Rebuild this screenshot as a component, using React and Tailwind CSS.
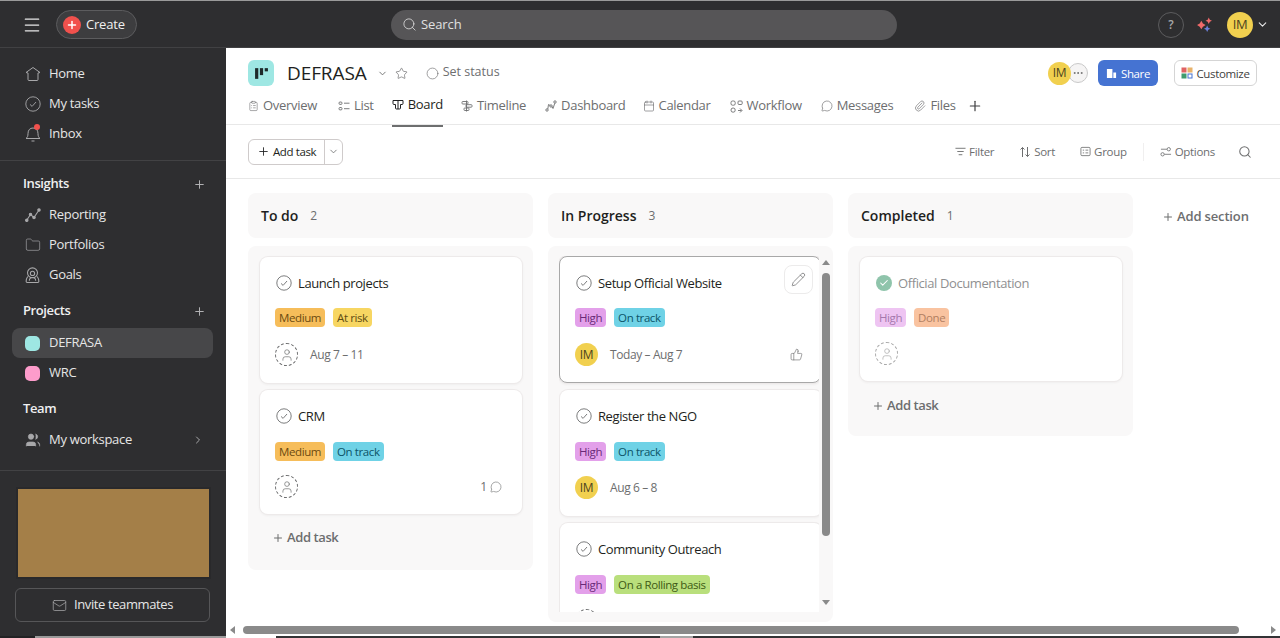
import React from 'react';
import { Plus, Search, ChevronDown, ChevronRight, Star, Circle, Pencil, ThumbsUp, Mail, Menu, Folder, Paperclip, Calendar, MessageCircle, Ellipsis, User, Users, Check, ClipboardList } from 'lucide-react';

const HomeIcon = (p) => (
  <svg viewBox="0 0 16 16" fill="none" stroke="currentColor" strokeWidth="1" {...p}>
    <path d="M8 1.500 15 6.500 13 7V13.500a1 1 0 0 1-1 1H4a1 1 0 0 1-1-1V7L1 6.500Z" strokeLinejoin="round" />
  </svg>
);
const TaskCheck = ({ className }) => (
  <svg viewBox="0 0 16 16" fill="none" stroke="currentColor" strokeWidth="0.9" className={className}>
    <circle cx="8" cy="8" r="7.200" />
    <path d="M5 8.400 7.100 10.400 11 6" />
  </svg>
);
const BellIcon = (p) => (
  <svg viewBox="0 0 16 16" fill="none" stroke="currentColor" strokeWidth="1" {...p}>
    <path d="M1 12.500c1.500-1 2-2.500 2-5C3 4 5 2 8 2s5 2 5 5.500c0 2.500.5 4 2 5Z" strokeLinejoin="round" />
    <path d="M6.500 15h3" />
  </svg>
);
const ReportIcon = (p) => (
  <svg viewBox="0 0 16 16" fill="none" stroke="currentColor" strokeWidth="1.100" {...p}>
    <path d="M1.500 13.500 5.500 7.500 9 10.500 14 3" />
    <circle cx="1.800" cy="13.200" r="1.200" fill="currentColor" />
    <circle cx="5.500" cy="7.500" r="1.200" fill="currentColor" />
    <circle cx="9" cy="10.500" r="1.200" fill="currentColor" />
    <circle cx="14" cy="3" r="1.200" fill="currentColor" />
  </svg>
);
const GoalIcon = (p) => (
  <svg viewBox="0 0 16 16" fill="none" stroke="currentColor" strokeWidth="1" {...p}>
    <circle cx="8" cy="5.500" r="4.700" />
    <circle cx="8" cy="6" r="2" />
    <path d="M3.500 9C2.500 10.500 2 12 2 13.500a1 1 0 0 0 1 1h10a1 1 0 0 0 1-1c0-1.500-.5-3-1.500-4.500" />
    <path d="M5 13c0-2 1.300-3.200 3-3.200s3 1.200 3 3.200" />
  </svg>
);
const BoardIcon = (p) => (
  <svg viewBox="0 0 12 12" fill="none" stroke="currentColor" strokeWidth="1" {...p}>
    <path d="M1 1.500h10v3a1 1 0 0 1-1 1H8.500V9a1 1 0 0 1-1 1h-3a1 1 0 0 1-1-1V5.500H2a1 1 0 0 1-1-1ZM6 2v8" />
  </svg>
);
const ListIcon = (p) => (
  <svg viewBox="0 0 12 12" fill="none" stroke="currentColor" strokeWidth="0.9" {...p}>
    <rect x="1" y="2" width="3" height="2.400" rx="1" />
    <rect x="1" y="7.500" width="3" height="2.400" rx="1" />
    <path d="M6 3.200h5.500M6 8.700h5.500" />
  </svg>
);
const TimelineIcon = (p) => (
  <svg viewBox="0 0 12 12" fill="none" stroke="currentColor" strokeWidth="0.9" {...p}>
    <rect x="1" y="1.500" width="6" height="2.500" rx="0.800" />
    <rect x="5" y="4.700" width="6" height="2.500" rx="0.800" />
    <rect x="3" y="8" width="5" height="2.500" rx="0.800" />
    <path d="M5.500 0.500v11" />
  </svg>
);
const DashIcon = (p) => (
  <svg viewBox="0 0 12 12" fill="none" stroke="currentColor" strokeWidth="0.9" {...p}>
    <circle cx="2" cy="10" r="1.200" />
    <circle cx="6" cy="6" r="1.200" />
    <circle cx="10" cy="2" r="1.200" />
    <path d="M2.800 9 3.500 4.500 5.200 5.500M7 6.500 8 8.500 9.800 3.200" />
  </svg>
);
const WorkflowIcon = (p) => (
  <svg viewBox="0 0 13 13" fill="none" stroke="currentColor" strokeWidth="0.9" {...p}>
    <rect x="1" y="1" width="4.200" height="4.200" rx="1.500" />
    <rect x="8" y="1" width="4.200" height="3.500" rx="1" />
    <rect x="1" y="8" width="4.200" height="4.200" rx="2" />
    <path d="M8 10.500h3.500M10 8.500l2 2-2 2" />
  </svg>
);
const FilterIcon = (p) => (
  <svg viewBox="0 0 12 12" fill="none" stroke="currentColor" strokeWidth="1" {...p}>
    <path d="M0.500 2.500h11M2.500 6h7M4 9.500h4" />
  </svg>
);
const SortIcon = (p) => (
  <svg viewBox="0 0 12 12" fill="none" stroke="currentColor" strokeWidth="1" {...p}>
    <path d="M3.500 11V1.500M1.500 3.500l2-2 2 2M8.500 1v9.500M6.500 8.500l2 2 2-2" />
  </svg>
);
const GroupIcon = (p) => (
  <svg viewBox="0 0 12 12" fill="none" stroke="currentColor" strokeWidth="0.9" {...p}>
    <rect x="1" y="1.500" width="10" height="9" rx="1.200" />
    <path d="M3 4.500h1.500M6 4.500h3M3 7.500h1.500M6 7.500h3" />
  </svg>
);
const OptionsIcon = (p) => (
  <svg viewBox="0 0 13 12" fill="none" stroke="currentColor" strokeWidth="0.9" {...p}>
    <circle cx="9.500" cy="3" r="1.800" />
    <circle cx="2.800" cy="8.500" r="1.800" />
    <path d="M1 3h6.500M4.800 8.500H12" />
  </svg>
);

// dashed circle with a person inside, used for unassigned tasks
const Unassigned = ({ faded }) => (
  <div className={`flex h-[23px] w-[23px] shrink-0 items-center justify-center rounded-full border border-dashed ${faded ? 'border-[#a9a9a9] text-[#a9a9a9]' : 'border-[#6d6e6f] text-[#6d6e6f]'}`}>
    <User className="h-[14px] w-[14px]" strokeWidth={1.200} />
  </div>
);

const Avatar = ({ className = 'h-[23px] w-[23px] text-[12px]' }) => (
  <div className={`flex shrink-0 items-center justify-center rounded-full bg-[#f1d04f] tracking-[-0.3px] text-[#4b4320] ${className}`}>IM</div>
);

const medium = 'bg-[#f6bd5a] text-[#6b4a10]';
const atRisk = 'bg-[#f7d662] text-[#5e4d12]';
const high = 'bg-[#e3a0ea] text-[#6a2a78]';
const onTrack = 'bg-[#6fd2e6] text-[#0c5468]';
const rolling = 'bg-[#b9df7c] text-[#3e5a14]';
const highDone = 'bg-[#eec4f2] text-[#a578ad]';
const done = 'bg-[#f9c3a0] text-[#b07e60]';

const Tag = ({ color, children }) => (
  <span className={`flex h-[19px] items-center rounded-[4px] px-[4px] text-[11.5px] tracking-[-0.4px] ${color}`}>{children}</span>
);

// first = top card of a column, its rows sit a pixel higher in the picture
const rowGap = (first, tight) => {
  if (first) return tight ? 'mt-[15px]' : 'mt-[16px]';
  return tight ? 'mt-[14px]' : 'mt-[15px]';
};

const Card = ({ title, tags, date, who, right, hovered, isDone, h, tight, nudge, first }) => (
  <div className={`w-[262px] shrink-0 rounded-[8px] bg-white pl-[16px] pt-[17px] shadow-[0_0_0_1px_#edeaea,0_1px_3px_#e6e4e4] ${h} ${hovered ? 'relative -mt-[1px] border border-[#a8a8a8]' : ''} ${nudge ? 'ml-[1px]' : ''}`}>
    <div className="flex items-center gap-[6px]">
      {isDone ? (
        <div className="flex h-[16px] w-[16px] items-center justify-center rounded-full bg-[#8fc4ab]">
          <Check className="h-[10px] w-[10px] text-white" strokeWidth={2.500} />
        </div>
      ) : (
        <TaskCheck className="h-[16px] w-[16px] text-[#6d6e6f]" />
      )}
      <span className={`text-[13px] leading-[18px] tracking-[-0.4px] ${isDone ? 'text-[#8f9091]' : 'text-[#1e1f21]'}`}>{title}</span>
    </div>
    <div className={`-ml-[1px] flex gap-[8px] ${first ? 'mt-[16px]' : 'mt-[17px]'}`}>
      {tags.map((t) => (
        <Tag key={t[0]} color={t[1]}>{t[0]}</Tag>
      ))}
    </div>
    <div className={`-ml-[1px] flex h-[23px] items-center ${hovered ? 'pr-[17px]' : 'pr-[20px]'} ${rowGap(first, tight)}`}>
      {who === 'me' ? <Avatar /> : <Unassigned faded={isDone} />}
      {date && <span className="ml-[12px] text-[12px] tracking-[-0.4px] text-[#6d6e6f]">{date}</span>}
      {right && <div className="ml-auto flex items-center gap-[3px] text-[12px] text-[#6d6e6f]">{right}</div>}
    </div>
    {hovered && (
      <div className="absolute right-[7px] top-[8px] flex h-[29px] w-[29px] items-center justify-center rounded-[8px] border border-[#ecebeb] bg-white">
        <Pencil className="h-[15px] w-[15px] text-[#6d6e6f]" strokeWidth={1.200} />
      </div>
    )}
  </div>
);

const AddTask = ({ className }) => (
  <div className={`flex items-center gap-[3px] text-[13px] font-semibold tracking-[-0.4px] text-[#6d6e6f] ${className}`}>
    <Plus className="h-[12px] w-[12px]" strokeWidth={2} />
    Add task
  </div>
);

const SideItem = ({ icon, label, right, active }) => (
  <div className={`ml-[12px] mr-[13px] flex h-[30px] items-center gap-[8px] rounded-[8px] pl-[12px] pr-[9px] text-[13px] tracking-[-0.3px] text-[#e6e6e6] ${active ? 'bg-[#474749]' : ''}`}>
    <span className="flex w-[17px] justify-center text-[#a8a8aa]">{icon}</span>
    <span>{label}</span>
    {right && <span className="ml-auto text-[#a8a8aa]">{right}</span>}
  </div>
);

const SideHead = ({ label, plus, className }) => (
  <div className={`flex items-center justify-between pl-[23px] pr-[20px] text-[13px] font-semibold tracking-[-0.4px] text-[#f0f0f0] ${className}`}>
    <span>{label}</span>
    {plus && <Plus className="h-[13px] w-[13px] text-[#b5b5b7]" strokeWidth={1.800} />}
  </div>
);

const tabs = [
  [<ClipboardList key="i" className="h-[12px] w-[11px]" strokeWidth={1.300} />, 'Overview', 'mr-[21px]'],
  [<ListIcon key="i" className="h-[12px] w-[12px]" />, 'List', 'mr-[18px]'],
  [<BoardIcon key="i" className="h-[12px] w-[12px]" />, 'Board', 'mr-[18px]'],
  [<TimelineIcon key="i" className="h-[12px] w-[12px]" />, 'Timeline', 'mr-[19px]'],
  [<DashIcon key="i" className="h-[12px] w-[12px]" />, 'Dashboard', 'mr-[17px]'],
  [<Calendar key="i" className="h-[12px] w-[12px]" strokeWidth={1.300} />, 'Calendar', 'mr-[19px]'],
  [<WorkflowIcon key="i" className="h-[13px] w-[13px]" />, 'Workflow', 'mr-[19px]'],
  [<MessageCircle key="i" className="h-[12px] w-[12px]" strokeWidth={1.300} />, 'Messages', 'mr-[21px]'],
  [<Paperclip key="i" className="h-[12px] w-[12px]" strokeWidth={1.300} />, 'Files', 'mr-[11px]'],
];

const ToolBtn = ({ icon, label, className }) => (
  <div className={`flex items-center gap-[3px] text-[11.5px] font-medium tracking-[-0.3px] text-[#6d6e6f] ${className}`}>
    {icon}
    {label}
  </div>
);

const ColHead = ({ title, n }) => (
  <div className="flex h-[45px] w-[285px] items-center rounded-[8px] bg-[#f9f8f8] pl-[13px]">
    <span className="text-[14px] font-semibold text-[#1e1f21]">{title}</span>
    <span className="ml-[12px] text-[12px] text-[#6d6e6f]">{n}</span>
  </div>
);

export default function App() {
  return (
    <div className="relative flex h-[638px] w-[1280px] flex-col overflow-hidden bg-white font-['Open_Sans',sans-serif]">
      {/* top bar */}
      <header className="flex h-[48px] shrink-0 items-center border-t border-t-[#9a9a9a] border-b border-b-[#414143] bg-[#2e2e30] pt-[1px]">
        <Menu className="ml-[22px] h-[20px] w-[20px] text-[#e8e8e8]" strokeWidth={1.500} />
        <div className="ml-[14px] flex h-[29px] w-[81px] items-center gap-[5px] rounded-full border border-[#5c5c5e] bg-[#3d3d3f] pl-[6px] text-[13px] tracking-[-0.2px] text-[#f0f0f0]">
          <div className="flex h-[18px] w-[18px] items-center justify-center rounded-full bg-[#f1514d]">
            <Plus className="h-[12px] w-[12px] text-white" strokeWidth={3} />
          </div>
          Create
        </div>
        <div className="ml-[254px] flex h-[30px] w-[506px] items-center gap-[4px] rounded-full bg-[#565557] pl-[11px] text-[13px] tracking-[-0.1px] text-[#e0e0e0]">
          <Search className="h-[15px] w-[15px]" strokeWidth={1.300} />
          Search
        </div>
        <div className="ml-[261px] flex h-[26px] w-[26px] items-center justify-center rounded-full border border-[#5c5c5e] text-[12px] font-semibold text-[#a8a8aa]">?</div>
        <svg viewBox="0 0 16 16" className="ml-[12px] h-[17px] w-[17px]">
          <path d="M5 4.500 6.500 7 9 8.500 6.500 10 5 12.500 3.500 10 1 8.500 3.500 7Z" fill="#f06a6a" />
          <path d="M12 1.500 13 3.500 15 4.500 13 5.500 12 7.500 11 5.500 9 4.500 11 3.500Z" fill="#f06a6a" />
          <path d="M10.500 9 11.500 11 13.500 12 11.500 13 10.500 15 9.500 13 7.500 12 9.500 11Z" fill="#6d7fd8" />
        </svg>
        <Avatar className="ml-[14px] h-[26px] w-[26px] text-[13px]" />
        <ChevronDown className="ml-[3px] h-[13px] w-[13px] text-[#e8e8e8]" strokeWidth={2} />
      </header>

      <div className="flex min-h-0 flex-1">
        {/* sidebar */}
        <aside className="flex w-[226px] shrink-0 flex-col bg-[#2e2e30] pt-[11px]">
          <SideItem icon={<HomeIcon className="h-[16px] w-[16px]" />} label="Home" />
          <SideItem icon={<TaskCheck className="h-[16px] w-[16px]" />} label="My tasks" />
          <div className="relative">
            <SideItem icon={<BellIcon className="h-[16px] w-[16px]" />} label="Inbox" />
            <span className="absolute left-[34px] top-[5px] h-[6px] w-[6px] rounded-full bg-[#f1514d]" />
          </div>
          <div className="mt-[11px] h-px bg-[#424244]" />
          <SideHead label="Insights" plus className="mt-[13px] h-[20px]" />
          <div className="mt-[6px]">
            <SideItem icon={<ReportIcon className="h-[16px] w-[16px]" />} label="Reporting" />
            <SideItem icon={<Folder className="h-[16px] w-[16px]" strokeWidth={1} />} label="Portfolios" />
            <SideItem icon={<GoalIcon className="h-[17px] w-[17px]" />} label="Goals" />
          </div>
          <SideHead label="Projects" plus className="mt-[11px] h-[20px]" />
          <div className="mt-[7px]">
            <SideItem active icon={<span className="h-[15px] w-[15px] rounded-[5px] bg-[#9ee7e3]" />} label="DEFRASA" />
            <SideItem icon={<span className="h-[15px] w-[15px] rounded-[5px] bg-[#fd9ccb]" />} label="WRC" />
          </div>
          <SideHead label="Team" className="mt-[11px] h-[20px]" />
          <div className="mt-[6px]">
            <SideItem icon={<Users className="h-[16px] w-[16px] fill-current" strokeWidth={1} />} label="My workspace" right={<ChevronRight className="h-[12px] w-[12px]" strokeWidth={2} />} />
          </div>
          <div className="mt-[15px] h-px bg-[#424244]" />
          <div className="ml-[16px] mt-[16px] h-[92px] w-[195px] border-2 border-[#29292b] bg-[#a47f48]" />
          <div className="ml-[15px] mr-[16px] mt-[9px] flex h-[34px] items-center justify-center gap-[7px] rounded-[6px] border border-[#565658] text-[13px] tracking-[-0.4px] text-[#e6e6e6]">
            <Mail className="h-[15px] w-[15px] text-[#a8a8aa]" strokeWidth={1.200} />
            Invite teammates
          </div>
        </aside>

        {/* main */}
        <main className="relative flex min-w-0 flex-1 flex-col">
          <div className="h-[77px] shrink-0 border-b border-[#e8e8e8] pl-[22px]">
            <div className="flex items-center pt-[11px]">
              <div className="flex h-[26px] w-[26px] items-center justify-center rounded-[6px] bg-[#9ee7e3]">
                <svg viewBox="0 0 14 14" className="h-[15px] w-[15px]" fill="#1e2a2a">
                  <rect x="1" y="2" width="3" height="10" />
                  <rect x="5.500" y="2" width="3" height="6.500" />
                  <rect x="10" y="2" width="3" height="3" />
                </svg>
              </div>
              <span className="ml-[13px] text-[19px] font-medium tracking-[-0.1px] text-[#1e1f21]">DEFRASA</span>
              <ChevronDown className="ml-[10px] h-[11px] w-[11px] text-[#6d6e6f]" strokeWidth={2} />
              <Star className="ml-[7px] h-[13px] w-[13px] text-[#6d6e6f]" strokeWidth={1.300} />
              <Circle className="ml-[18px] h-[13px] w-[13px] text-[#6d6e6f]" strokeWidth={1.200} />
              <span className="ml-[4px] -mt-[2px] text-[12.5px] font-medium text-[#6d6e6f]">Set status</span>
              <div className="ml-auto flex items-center pr-[23px]">
                <Avatar className="z-10 h-[23px] w-[23px] text-[12px]" />
                <div className="-ml-[3px] flex h-[20px] w-[20px] items-center justify-center rounded-full border border-[#c9c9c9] bg-[#f5f4f4]">
                  <Ellipsis className="h-[12px] w-[12px] text-[#6d6e6f]" />
                </div>
                <div className="ml-[10px] flex h-[26px] w-[60px] items-center justify-center gap-[4px] rounded-[6px] bg-[#4573d2] text-[11.5px] tracking-[-0.4px] text-white">
                  <svg viewBox="0 0 12 12" className="h-[11px] w-[11px]" fill="currentColor"><path d="M1 1h6v10H1ZM8 5h3v6H8Z" /></svg>
                  Share
                </div>
                <div className="ml-[16px] flex h-[26px] w-[83px] items-center justify-center gap-[3px] rounded-[6px] border border-[#d5d5d5] text-[11.5px] tracking-[-0.35px] text-[#3f3f41]">
                  <svg viewBox="0 0 12 12" className="h-[12px] w-[12px]">
                    <rect x="0.500" y="0.500" width="5" height="5" fill="#e06262" />
                    <rect x="6.500" y="0.500" width="5" height="5" fill="#e8b26a" />
                    <rect x="0.500" y="6.500" width="5" height="5" fill="#3f9b6e" />
                    <rect x="7" y="7" width="4" height="4" fill="none" stroke="#4573d2" />
                  </svg>
                  Customize
                </div>
              </div>
            </div>
            <nav className="mt-[8px] flex h-[31px] items-start">
              {tabs.map(([icon, label, gap]) => (
                <div key={label} className={`flex h-[31px] items-center gap-[4px] pb-[10px] text-[13px] font-medium tracking-[-0.3px] ${gap} ${label === 'Board' ? 'border-b-2 border-[#6d6e6f] text-[#1e1f21]' : 'text-[#6d6e6f]'}`}>
                  {icon}
                  {label}
                </div>
              ))}
              <Plus className="mt-[2px] h-[16px] w-[16px] text-[#3f3f41]" strokeWidth={1.800} />
            </nav>
          </div>

          <div className="flex h-[54px] shrink-0 items-center border-b border-[#e8e8e8] pl-[22px] pr-[28px]">
            <div className="flex h-[26px] w-[95px] items-center rounded-[6px] border border-[#cfcbcb] text-[11.5px] tracking-[-0.4px] text-[#1e1f21]">
              <div className="flex flex-1 items-center gap-[3px] pl-[8px]">
                <Plus className="h-[13px] w-[13px]" strokeWidth={1.600} />
                Add task
              </div>
              <div className="flex h-full w-[18px] items-center justify-center border-l border-[#cfcbcb]">
                <ChevronDown className="h-[11px] w-[11px] text-[#6d6e6f]" strokeWidth={1.800} />
              </div>
            </div>
            <ToolBtn className="ml-auto" icon={<FilterIcon className="h-[11px] w-[11px]" />} label="Filter" />
            <ToolBtn className="ml-[25px]" icon={<SortIcon className="h-[12px] w-[12px]" />} label="Sort" />
            <ToolBtn className="ml-[25px]" icon={<GroupIcon className="h-[11px] w-[11px]" />} label="Group" />
            <div className="ml-[16px] mr-[16px] h-[18px] w-px bg-[#f0efef]" />
            <ToolBtn icon={<OptionsIcon className="h-[12px] w-[12px]" />} label="Options" />
            <Search className="ml-[23px] h-[14px] w-[14px] text-[#6d6e6f]" strokeWidth={1.800} />
          </div>

          {/* board */}
          <div className="flex gap-[15px] pl-[22px] pt-[14px]">
            <div className="flex w-[285px] flex-col gap-[8px]">
              <ColHead title="To do" n="2" />
              <div className="flex h-[324px] flex-col gap-[7px] rounded-[8px] bg-[#f9f8f8] pl-[12px] pt-[11px]">
                <Card first h="h-[126px]" title="Launch projects" tags={[['Medium', medium], ['At risk', atRisk]]} date="Aug 7 – 11" />
                <Card h="h-[124px]" tight title="CRM" tags={[['Medium', medium], ['On track', onTrack]]} right={<>1<MessageCircle className="h-[12px] w-[12px]" strokeWidth={1.200} /></>} />
                <AddTask className="ml-[12px] mt-[7px]" />
              </div>
            </div>

            <div className="flex w-[285px] flex-col gap-[8px]">
              <ColHead title="In Progress" n="3" />
              <div className="relative h-[376px] overflow-hidden rounded-[8px] bg-[#f9f8f8]">
                <div className="ml-[11px] mt-[10px] flex h-[356px] w-[260px] flex-col gap-[7px] overflow-hidden pt-[1px]">
                  <Card first hovered h="h-[127px]" title="Setup Official Website" tags={[['High', high], ['On track', onTrack]]} who="me" date="Today – Aug 7" right={<ThumbsUp className="h-[13px] w-[13px]" strokeWidth={1.200} />} />
                  <Card nudge h="h-[126px]" title="Register the NGO" tags={[['High', high], ['On track', onTrack]]} who="me" date="Aug 6 – 8" />
                  <Card nudge h="h-[126px]" title="Community Outreach" tags={[['High', high], ['On a Rolling basis', rolling]]} />
                </div>
                {/* column scrollbar */}
                <div className="absolute right-[3px] top-[14px] h-0 w-0 border-x-[4px] border-b-[5px] border-x-transparent border-b-[#8a8a8a]" />
                <div className="absolute right-[3px] top-[27px] h-[263px] w-[8px] rounded-full bg-[#8a8a8a]" />
                <div className="absolute right-[3px] top-[354px] h-0 w-0 border-x-[4px] border-t-[5px] border-x-transparent border-t-[#8a8a8a]" />
              </div>
            </div>

            <div className="flex w-[285px] flex-col gap-[8px]">
              <ColHead title="Completed" n="1" />
              <div className="flex h-[190px] flex-col rounded-[8px] bg-[#f9f8f8] pl-[12px] pt-[11px]">
                <Card first isDone tight h="h-[124px]" title="Official Documentation" tags={[['High', highDone], ['Done', done]]} />
                <AddTask className="ml-[12px] mt-[15px]" />
              </div>
            </div>

            <div className="ml-[14px] mt-[16px] flex h-[16px] items-center gap-[3px] text-[13px] font-semibold tracking-[-0.15px] text-[#6d6e6f]">
              <Plus className="h-[12px] w-[12px]" strokeWidth={2} />
              Add section
            </div>
          </div>

          {/* page scrollbar */}
          <div className="absolute bottom-[4px] left-[17px] h-[8px] w-[996px] rounded-full bg-[#8a8a8a]" />
          <div className="absolute bottom-[4px] left-[4px] h-0 w-0 border-y-[4px] border-r-[5px] border-y-transparent border-r-[#8a8a8a]" />
          <div className="absolute bottom-[4px] right-[4px] h-0 w-0 border-y-[4px] border-l-[5px] border-y-transparent border-l-[#8a8a8a]" />
        </main>
      </div>

      {/* strip along the bottom edge of the capture */}
      <div className="absolute bottom-0 left-0 flex h-[2px] w-[1280px]">
        <div className="w-[35px] bg-[#222224]" />
        <div className="w-[191px] bg-[#9a9a9a]" />
        <div className="w-[50px] bg-white" />
        <div className="w-[384px] bg-[#333335]" />
        <div className="w-[33px] bg-[#a5a5a5]" />
        <div className="flex-1 bg-[#333335]" />
      </div>
    </div>
  );
}
